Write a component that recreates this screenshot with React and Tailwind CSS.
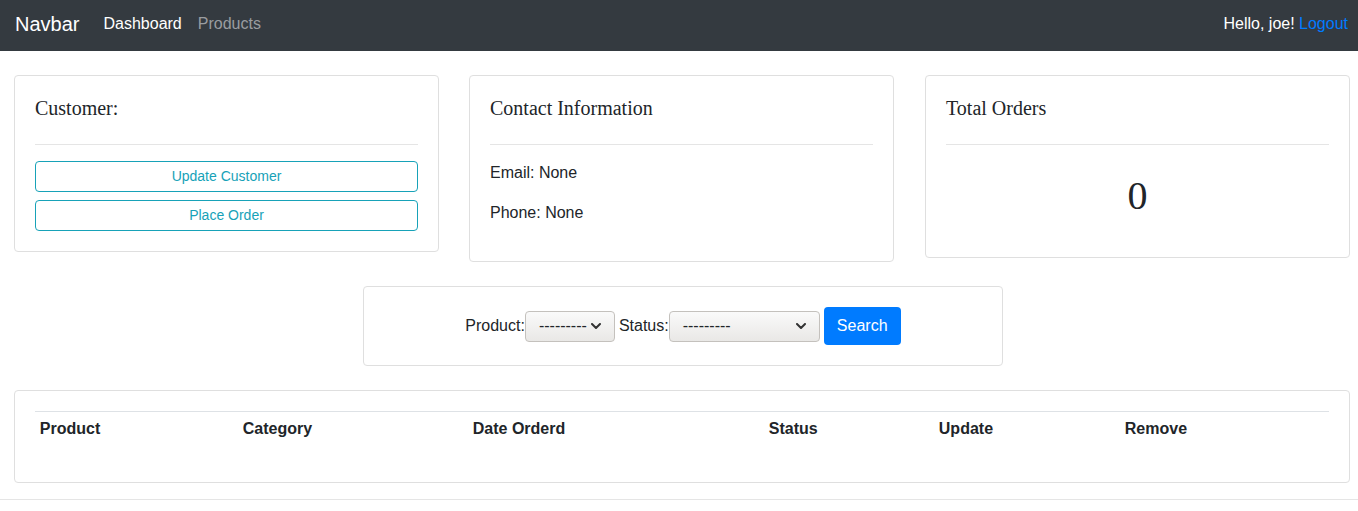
import React from 'react';

function Card({ className = '', children }) {
  return (
    <div className={`border border-[#dfdfdf] rounded-[4px] bg-white p-[20px] ${className}`}>
      {children}
    </div>
  );
}

function CardTitle({ children }) {
  // padding instead of margin so it doesn't collapse with the hr below
  return (
    <h5 className="font-['Liberation_Serif','Times_New_Roman',serif] text-[20px] leading-[24px] pb-[8px]">
      {children}
    </h5>
  );
}

function Chevron() {
  return (
    <svg width="10" height="6" viewBox="0 0 10 6" fill="none" stroke="#333" strokeWidth="2" strokeLinecap="round" strokeLinejoin="round">
      <polyline points="1,1 5,5 9,1" />
    </svg>
  );
}

// looks like the native chrome select box
function FakeSelect({ width }) {
  return (
    <div
      className={`${width} h-[31px] flex items-center justify-between pl-[13px] pr-[13px] border border-[#c4c1bd] rounded-[4px] bg-gradient-to-b from-[#fafafa] to-[#e9e8e6] text-[16px] leading-none`}
    >
      <span>---------</span>
      <Chevron />
    </div>
  );
}

export default function App() {
  return (
    <div className="min-h-screen bg-white text-[#212529] font-['Liberation_Sans',Arial,sans-serif] text-[16px]">
      <nav className="h-[51px] bg-[#343a40] flex items-center pl-[15px] pr-[10px] pb-[3px]">
        <span className="text-[20px] leading-[30px] text-white mr-[24px]">Navbar</span>
        <a className="leading-6 text-white">Dashboard</a>
        <a className="leading-6 ml-[16px] text-[#9a9da0]">Products</a>
        <div className="ml-auto leading-6 text-white">
          Hello, joe! <a className="text-[#007bff]">Logout</a>
        </div>
      </nav>

      <div className="pt-[24px]">
        <div className="flex items-start pl-[14px] gap-[30px]">
          <Card className="w-[425px]">
            <CardTitle>Customer:</CardTitle>
            <hr className="mt-[16px] mb-[16px] border-t border-[#e5e5e5]" />
            <button className="block w-full h-[31px] border border-[#17a2b8] rounded-[4px] text-[#17a2b8] text-[14px]">
              Update Customer
            </button>
            <button className="block w-full h-[31px] mt-[8px] border border-[#17a2b8] rounded-[4px] text-[#17a2b8] text-[14px]">
              Place Order
            </button>
          </Card>

          <Card className="w-[425px]">
            <CardTitle>Contact Information</CardTitle>
            <hr className="mt-[16px] mb-[16px] border-t border-[#e5e5e5]" />
            <p className="leading-6 mb-[16px]">Email: None</p>
            <p className="leading-6 mb-[16px]">Phone: None</p>
          </Card>

          <Card className="w-[425px] ml-[1px]">
            <CardTitle>Total Orders</CardTitle>
            <hr className="mt-[16px] border-t border-[#e5e5e5]" />
            <div className="pt-[27px] pb-[17px] text-center font-['Liberation_Serif','Times_New_Roman',serif] text-[40px] leading-[48px]">
              0
            </div>
          </Card>
        </div>

        <Card className="mt-[24px] ml-[363px] w-[640px] h-[80px] flex items-center justify-center">
          <span className="leading-6">Product:</span>
          <FakeSelect width="w-[90px]" />
          <span className="leading-6 ml-[4px]">Status:</span>
          <FakeSelect width="w-[151px]" />
          <button className="ml-[4px] h-[38px] w-[77px] rounded-[4px] bg-[#007bff] text-white leading-6">
            Search
          </button>
        </Card>

        <Card className="mt-[24px] ml-[14px] w-[1336px]">
          <table className="w-full border-collapse mb-[16px]">
            <thead>
              <tr className="border-t border-[#dee2e6]">
                <th className="w-[203px] p-[4.8px] text-left font-bold leading-6">Product</th>
                <th className="w-[230px] p-[4.8px] text-left font-bold leading-6">Category</th>
                <th className="w-[296px] p-[4.8px] text-left font-bold leading-6">Date Orderd</th>
                <th className="w-[170px] p-[4.8px] text-left font-bold leading-6">Status</th>
                <th className="w-[186px] p-[4.8px] text-left font-bold leading-6">Update</th>
                <th className="w-[209px] p-[4.8px] text-left font-bold leading-6">Remove</th>
              </tr>
            </thead>
          </table>
        </Card>

        <hr className="mt-[16px] border-t border-[#e5e5e5]" />
      </div>
    </div>
  );
}
